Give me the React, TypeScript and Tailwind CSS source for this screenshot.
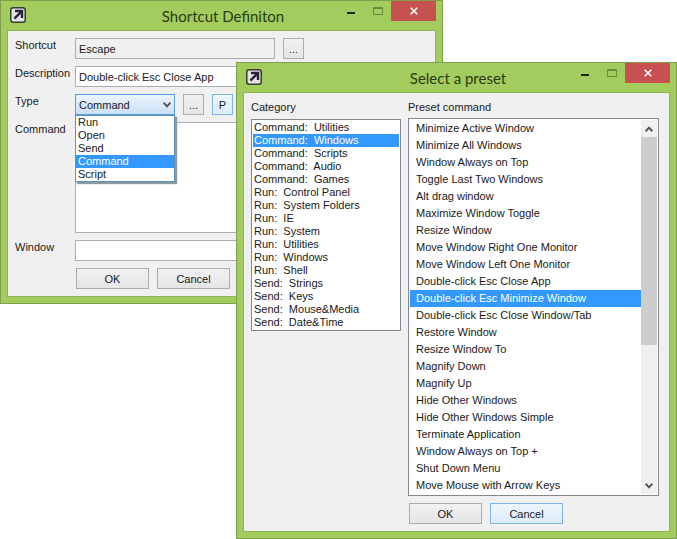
import { useState } from "react";
import type { ReactNode } from "react";

const TYPES = ["Run", "Open", "Send", "Command", "Script"];

const CATEGORIES = [
  "Command:\u00a0 Utilities",
  "Command:\u00a0 Windows",
  "Command:\u00a0 Scripts",
  "Command:\u00a0 Audio",
  "Command:\u00a0 Games",
  "Run:\u00a0 Control Panel",
  "Run:\u00a0 System Folders",
  "Run:\u00a0 IE",
  "Run:\u00a0 System",
  "Run:\u00a0 Utilities",
  "Run:\u00a0 Windows",
  "Run:\u00a0 Shell",
  "Send:\u00a0 Strings",
  "Send:\u00a0 Keys",
  "Send:\u00a0 Mouse&Media",
  "Send:\u00a0 Date&Time",
];

const PRESETS = [
  "Minimize Active Window",
  "Minimize All Windows",
  "Window Always on Top",
  "Toggle Last Two Windows",
  "Alt drag window",
  "Maximize Window Toggle",
  "Resize Window",
  "Move Window Right One Monitor",
  "Move Window Left One Monitor",
  "Double-click Esc Close App",
  "Double-click Esc Minimize Window",
  "Double-click Esc Close Window/Tab",
  "Restore Window",
  "Resize Window To",
  "Magnify Down",
  "Magnify Up",
  "Hide Other Windows",
  "Hide Other Windows Simple",
  "Terminate Application",
  "Window Always on Top +",
  "Shut Down Menu",
  "Move Mouse with Arrow Keys",
];

const FIELD = "h-[21px] border border-[#abadb3] bg-white px-[3px] outline-none";
const BUTTON = "h-[21px] border border-[#acacac] bg-linear-to-b from-[#f1f1f1] to-[#e5e5e5] text-center";
const BUTTON_HOT = "h-[21px] border border-[#7eb4ea] bg-linear-to-b from-[#eef6fd] to-[#dcecfb] text-center";

function AppIcon() {
  return (
    <svg width="16" height="16" viewBox="0 0 16 16" aria-hidden="true">
      <rect x="0.75" y="0.75" width="14.5" height="14.5" rx="2.5" fill="#e2e4e4" stroke="#33402c" strokeWidth="1.5" />
      <path d="M5 4h7v7M11.4 4.6L4.4 11.6" fill="none" stroke="#2b2438" strokeWidth="2.4" />
    </svg>
  );
}

function Chevron({ up = false }: { up?: boolean }) {
  return (
    <svg width="8" height="6" viewBox="0 0 8 6" aria-hidden="true" className={up ? "rotate-180" : ""}>
      <path d="M0.6 0.8l3.4 3.6L7.4 0.8" fill="none" stroke="#555" strokeWidth="2" />
    </svg>
  );
}

function Dialog({ title, className, children }: {
  title: string;
  className: string;
  children: ReactNode;
}) {
  return (
    <section aria-label={title} className={`border border-[#7f9f4b] bg-[#a2cd5e] ${className}`}>
      <header className="grid h-[29px] grid-cols-[1fr_auto_1fr] items-start pr-[6px] pl-[9px]">
        <span className="pt-[6px]">
          <AppIcon />
        </span>
        <h1 className="pt-1 font-['Lato','Open_Sans',sans-serif] text-[15px] leading-[22px] text-[#2c3b14]">{title}</h1>
        <div className="flex justify-end">
          <button aria-label="Minimize" className="flex h-5 w-[27px] items-center justify-center pt-1">
            <span className="h-[2px] w-2 bg-[#1d2610]" />
          </button>
          <button aria-label="Maximize" className="flex h-5 w-[27px] items-center justify-center">
            <span className="h-2 w-[10px] border border-t-2 border-[#6a8a35]" />
          </button>
          <button aria-label="Close" className="flex h-5 w-[45px] items-center justify-center bg-[#c75050]">
            <svg width="8" height="8" viewBox="0 0 8 8" aria-hidden="true">
              <path d="M0.7 0.7l6.6 6.6M7.3 0.7L0.7 7.3" stroke="#fff" strokeWidth="1.6" />
            </svg>
          </button>
        </div>
      </header>
      <div className="mx-[6px] mb-[6px] border border-[#8fb454] bg-[#f0f0f0]">{children}</div>
    </section>
  );
}

export default function App() {
  const [type, setType] = useState("Command");
  const [category, setCategory] = useState(CATEGORIES[1]);
  const [preset, setPreset] = useState(PRESETS[10]);

  return (
    <main className="relative min-h-screen bg-white font-['Liberation_Sans',Arial,sans-serif] text-[11px] leading-[14px] text-[#1a1a1a]">
      <Dialog title="Shortcut Definiton" className="mr-[234px]">
        <form className="grid grid-cols-[60px_1fr] items-start gap-y-[7px] p-[7px]">
          <label htmlFor="shortcut">Shortcut</label>
          <div className="flex gap-2">
            <input id="shortcut" readOnly value="Escape" className="h-[21px] w-[200px] border border-[#abadb3] bg-[#f0f0f0] px-[3px] outline-none" />
            <button type="button" className={`w-[21px] ${BUTTON}`}>...</button>
          </div>

          <label htmlFor="description">Description</label>
          <input id="description" defaultValue="Double-click Esc Close App" className={FIELD} />

          <label htmlFor="type">Type</label>
          <div className="flex gap-2">
            <div className="relative w-[100px]">
              <select
                id="type"
                value={type}
                onChange={(e) => setType(e.target.value)}
                className="block h-[21px] w-full appearance-none border border-[#569de5] bg-linear-to-b from-[#ecf4fc] to-[#c9e0f7] px-[3px] outline-none"
              >
                {TYPES.map((t) => (
                  <option key={t}>{t}</option>
                ))}
              </select>
              <span className="pointer-events-none absolute top-2 right-1">
                <Chevron />
              </span>
              <ul role="listbox" aria-label="Type" className="absolute top-full left-0 z-10 w-full border border-[#5b93b8] bg-white shadow-[2px_2px_1px_#8c9aa5]">
                {TYPES.map((t) => (
                  <li
                    key={t}
                    role="option"
                    aria-selected={t === type}
                    onClick={() => setType(t)}
                    className={`px-[2px] leading-[13px] ${t === type ? "bg-[#3399ff] text-white" : ""}`}
                  >
                    {t}
                  </li>
                ))}
              </ul>
            </div>
            <button type="button" className={`w-[21px] ${BUTTON}`}>...</button>
            <button type="button" className={`w-[21px] ${BUTTON_HOT}`}>P</button>
          </div>

          <label htmlFor="command">Command</label>
          <textarea id="command" className="block h-[111px] w-full resize-none border border-[#abadb3] bg-white p-[3px] outline-none" />

          <label htmlFor="window">Window</label>
          <input id="window" className={FIELD} />

          <div className="col-start-2 flex gap-2 pl-px">
            <button type="button" className={`w-[73px] ${BUTTON}`}>OK</button>
            <button type="button" className={`w-[73px] ${BUTTON}`}>Cancel</button>
          </div>
        </form>
      </Dialog>

      <Dialog title="Select a preset" className="absolute top-[62px] right-0 left-[236px] z-20">
        <form className="grid grid-cols-[150px_1fr] items-start gap-x-[7px] p-[7px]">
          <div>
            <label htmlFor="category" className="block pb-[5px]">Category</label>
            <select
              id="category"
              size={16}
              value={category}
              onChange={(e) => setCategory(e.target.value)}
              className="block w-full appearance-none overflow-hidden border border-[#828790] bg-white p-px outline-none"
            >
              {CATEGORIES.map((c) => (
                <option
                  key={c}
                  value={c}
                  className="h-[13px] min-h-0 px-px py-0 checked:bg-[linear-gradient(#3399ff,#3399ff)] checked:text-white"
                >
                  {c}
                </option>
              ))}
            </select>
          </div>
          <div className="pr-[3px]">
            <label htmlFor="preset" className="block pb-1">Preset command</label>
            <div className="flex border border-[#828790] bg-white p-px">
              <select
                id="preset"
                size={22}
                value={preset}
                onChange={(e) => setPreset(e.target.value)}
                className="block min-w-0 flex-1 appearance-none overflow-hidden bg-white outline-none"
              >
                {PRESETS.map((p) => (
                  <option
                    key={p}
                    value={p}
                    className="h-[17px] min-h-0 px-[6px] pt-[2px] pb-0 checked:bg-[linear-gradient(#3399ff,#3399ff)] checked:text-white"
                  >
                    {p}
                  </option>
                ))}
              </select>
              <div aria-hidden="true" className="flex w-4 flex-col bg-[#f0f0f0]">
                <span className="flex h-[17px] items-center justify-center">
                  <Chevron up />
                </span>
                <span className="h-[208px] bg-[#cdcdcd]" />
                <span className="mt-auto flex h-[17px] items-center justify-center">
                  <Chevron />
                </span>
              </div>
            </div>
            <div className="flex gap-2 pt-[7px] pl-px">
              <button type="button" className={`w-[73px] ${BUTTON}`}>OK</button>
              <button type="button" className={`w-[73px] ${BUTTON_HOT}`}>Cancel</button>
            </div>
          </div>
        </form>
      </Dialog>
    </main>
  );
}
